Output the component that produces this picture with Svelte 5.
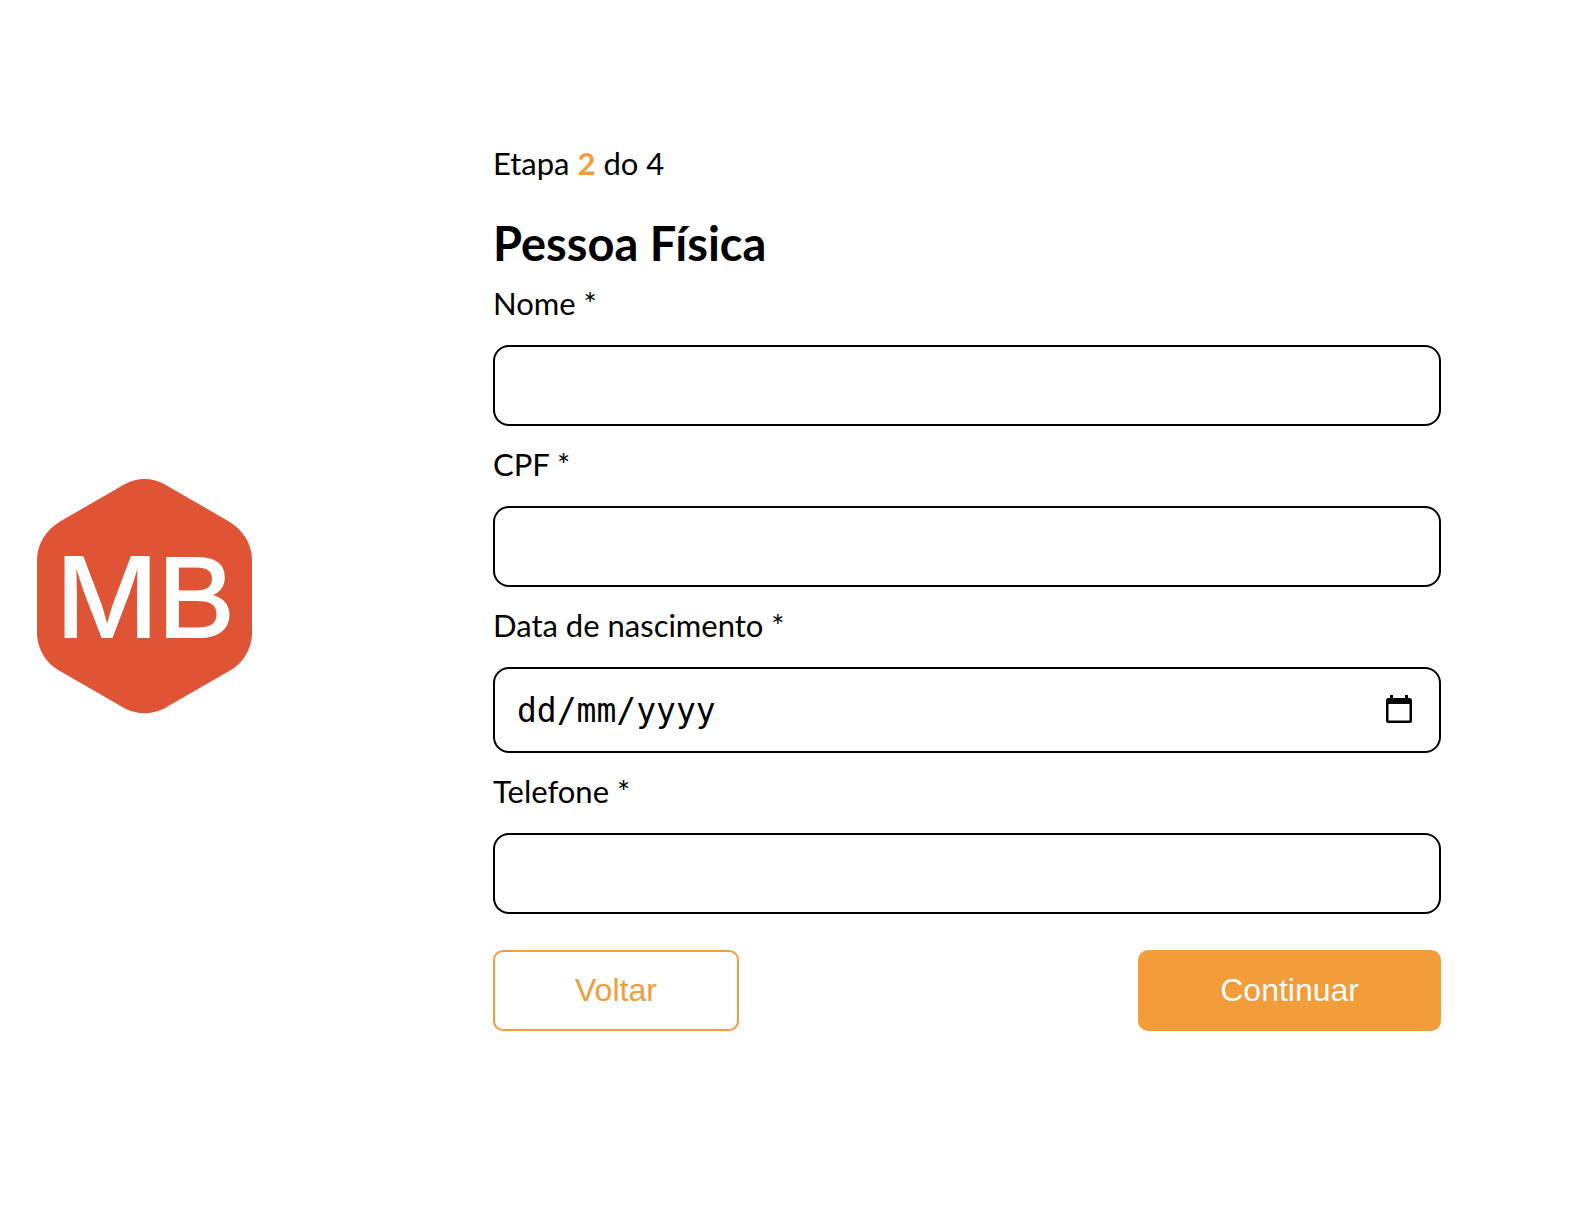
<script>
  let nome = $state('');
  let cpf = $state('');
  let nascimento = $state('');
  let telefone = $state('');
</script>

<main class="page">
  <aside class="brand">
    <svg class="logo" viewBox="0 0 215 235" role="img" aria-label="MB">
      <path
        fill="#df5434"
        d="M88 5 Q107.500 -5 127 5 L192 42.500 C206 51 215 65 215 81 V156 C214 171 206 184 193 191.500 L127 229.500 Q107.500 239 88 229.500 L22 191.500 C9 184 1 171 0 156 V81 C0 65 9 51 23 42.500 Z"
      />
      <text class="mark m" x="70" y="159">M</text>
      <text class="mark b" x="159" y="158">B</text>
    </svg>
  </aside>

  <form class="form" onsubmit={(e) => e.preventDefault()}>
    <p class="step">Etapa <strong>2</strong> do 4</p>
    <h1>Pessoa Física</h1>

    <div class="field">
      <label for="nome">Nome *</label>
      <input id="nome" type="text" bind:value={nome} />
    </div>
    <div class="field">
      <label for="cpf">CPF *</label>
      <input id="cpf" type="text" bind:value={cpf} />
    </div>
    <div class="field">
      <label for="nascimento">Data de nascimento *</label>
      <div class="date">
        <input id="nascimento" type="text" placeholder="dd/mm/yyyy" bind:value={nascimento} />
        <button class="picker" type="button" aria-label="Abrir calendário">
          <svg viewBox="0 0 26 28" aria-hidden="true">
            <path
              fill="#000"
              fill-rule="evenodd"
              d="M4 0h3v3h12V0h3v3h1.500A2.500 2.500 0 0 1 26 5.500v20a2.500 2.500 0 0 1-2.500 2.500h-21A2.500 2.500 0 0 1 0 25.500v-20A2.500 2.500 0 0 1 2.500 3H4zM2.500 9v16.500h21V9z"
            />
          </svg>
        </button>
      </div>
    </div>
    <div class="field">
      <label for="telefone">Telefone *</label>
      <input id="telefone" type="tel" bind:value={telefone} />
    </div>

    <div class="actions">
      <button class="btn outline" type="button">Voltar</button>
      <button class="btn solid" type="submit">Continuar</button>
    </div>
  </form>
</main>

<style>
  :global(body) {
    margin: 0;
    background: #fff;
  }

  .page {
    box-sizing: border-box;
    min-height: 100vh;
    padding: 0 147px 18px 37px;
    display: grid;
    grid-template-columns: minmax(0, 456fr) minmax(0, 948fr);
    align-items: center;
    font-family: Lato, 'Open Sans', sans-serif;
    font-size: 31px;
    font-weight: 400;
    line-height: 40px;
    color: #000;
  }

  .logo {
    display: block;
    width: 215px;
    height: 235px;
  }

  .mark {
    text-anchor: middle;
    fill: #fff;
  }

  .mark.m {
    font-family: Inter, sans-serif;
    font-size: 113px;
    font-weight: 500;
  }

  .mark.b {
    font-family: 'Liberation Sans', Arial, sans-serif;
    font-size: 115px;
    font-weight: 400;
    stroke: #fff;
    stroke-width: 2px;
  }

  .form {
    display: flex;
    flex-direction: column;
    padding-bottom: 18px;
  }

  .step {
    margin: 0 0 32px;
  }

  .step strong {
    color: #f39c3a;
    font-weight: 700;
  }

  h1 {
    margin: 0 0 12px;
    font-size: 47px;
    line-height: 56px;
    font-weight: 700;
  }

  .field {
    display: flex;
    flex-direction: column;
    gap: 22px;
    margin-bottom: 18px;
  }

  .field input {
    box-sizing: border-box;
    width: 100%;
    height: 81px;
    padding: 0 24px;
    border: 2px solid #000;
    border-radius: 16px;
    background: #fff;
    color: #000;
    font-family: 'Liberation Sans', Arial, sans-serif;
    font-size: 32px;
  }

  .date {
    position: relative;
  }

  .field .date input {
    display: block;
    height: 86px;
    padding-right: 72px;
    padding-left: 22px;
    font-family: 'DejaVu Sans Mono', monospace;
    font-size: 33px;
  }

  .date input::placeholder {
    color: #000;
    opacity: 1;
  }

  .picker {
    position: absolute;
    top: 0;
    bottom: 2px;
    right: 29px;
    display: flex;
    align-items: center;
    padding: 0;
    border: 0;
    background: none;
    cursor: pointer;
  }

  .picker svg {
    display: block;
    width: 26px;
    height: 28px;
  }

  .actions {
    display: flex;
    justify-content: space-between;
    padding-top: 18px;
  }

  .btn {
    height: 81px;
    padding: 0 80px;
    border: 2px solid #f39c3a;
    border-radius: 10px;
    font-family: 'Liberation Sans', Arial, sans-serif;
    font-size: 32px;
    cursor: pointer;
  }

  .outline {
    background: #fff;
    color: #f39c3a;
  }

  .solid {
    background: #f39c3a;
    color: #fff;
  }
</style>
